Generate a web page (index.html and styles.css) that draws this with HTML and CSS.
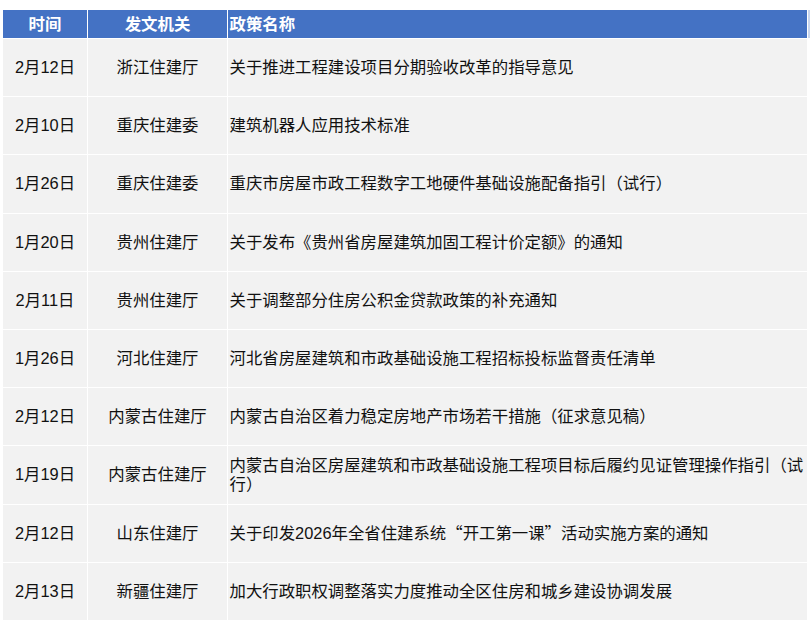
FILE: index.html
```html
<!DOCTYPE html>
<html lang="zh-CN">
<head>
<meta charset="utf-8">
<link rel="stylesheet" href="styles.css">
</head>
<body>
<table class="policy">
  <thead>
    <tr>
      <th class="c-date">时间</th>
      <th class="c-org">发文机关</th>
      <th class="c-name">政策名称</th>
      <th class="c-extra"></th>
    </tr>
  </thead>
  <tbody>
    <tr><td class="c-date">2月12日</td><td class="c-org">浙江住建厅</td><td class="c-name">关于推进工程建设项目分期验收改革的指导意见</td><td class="c-extra"></td></tr>
    <tr><td class="c-date">2月10日</td><td class="c-org">重庆住建委</td><td class="c-name">建筑机器人应用技术标准</td><td class="c-extra"></td></tr>
    <tr><td class="c-date">1月26日</td><td class="c-org">重庆住建委</td><td class="c-name">重庆市房屋市政工程数字工地硬件基础设施配备指引（试行）</td><td class="c-extra"></td></tr>
    <tr><td class="c-date">1月20日</td><td class="c-org">贵州住建厅</td><td class="c-name">关于发布《贵州省房屋建筑加固工程计价定额》的通知</td><td class="c-extra"></td></tr>
    <tr><td class="c-date">2月11日</td><td class="c-org">贵州住建厅</td><td class="c-name">关于调整部分住房公积金贷款政策的补充通知</td><td class="c-extra"></td></tr>
    <tr><td class="c-date">1月26日</td><td class="c-org">河北住建厅</td><td class="c-name">河北省房屋建筑和市政基础设施工程招标投标监督责任清单</td><td class="c-extra"></td></tr>
    <tr><td class="c-date">2月12日</td><td class="c-org">内蒙古住建厅</td><td class="c-name">内蒙古自治区着力稳定房地产市场若干措施（征求意见稿）</td><td class="c-extra"></td></tr>
    <tr><td class="c-date">1月19日</td><td class="c-org">内蒙古住建厅</td><td class="c-name">内蒙古自治区房屋建筑和市政基础设施工程项目标后履约见证管理操作指引（试行）</td><td class="c-extra"></td></tr>
    <tr><td class="c-date">2月12日</td><td class="c-org">山东住建厅</td><td class="c-name">关于印发2026年全省住建系统<span class="cjk">“</span>开工第一课<span class="cjk">”</span>活动实施方案的通知</td><td class="c-extra"></td></tr>
    <tr><td class="c-date">2月13日</td><td class="c-org">新疆住建厅</td><td class="c-name">加大行政职权调整落实力度推动全区住房和城乡建设协调发展</td><td class="c-extra"></td></tr>
  </tbody>
</table>
</body>
</html>
```

FILE: styles.css
```css
html, body {
  margin: 0;
  padding: 0;
  background: #ffffff;
  overflow: hidden;
  width: 810px;
  height: 621px;
}

.policy {
  margin: 9px 0 0 2px;
  border-collapse: separate;
  border-spacing: 1px;
  table-layout: fixed;
  width: 902px;
  font-family: "Liberation Sans", "Noto Sans CJK SC", sans-serif;
  font-size: 16.4px;
  color: #111111;
}

.policy th {
  background: #4472c4;
  color: #ffffff;
  font-weight: bold;
  height: 28px;
  padding: 0;
  line-height: 20px;
}

.policy td {
  background: #f2f2f2;
  height: 57.2px;
  padding: 0;
  line-height: 19px;
  vertical-align: middle;
}

.cjk {
  font-family: "Noto Sans CJK SC", sans-serif;
}

.c-date {
  width: 84px;
  text-align: center;
}

.c-org {
  width: 139px;
  text-align: center;
}

.c-name {
  width: 579px;
  text-align: left;
  padding-left: 1.5px !important;
  box-sizing: border-box;
}

.c-extra {
  width: 96px;
}

.policy th.c-extra {
  background: #c9d6ee;
}

.policy td.c-extra {
  background: #ffffff;
}
```
